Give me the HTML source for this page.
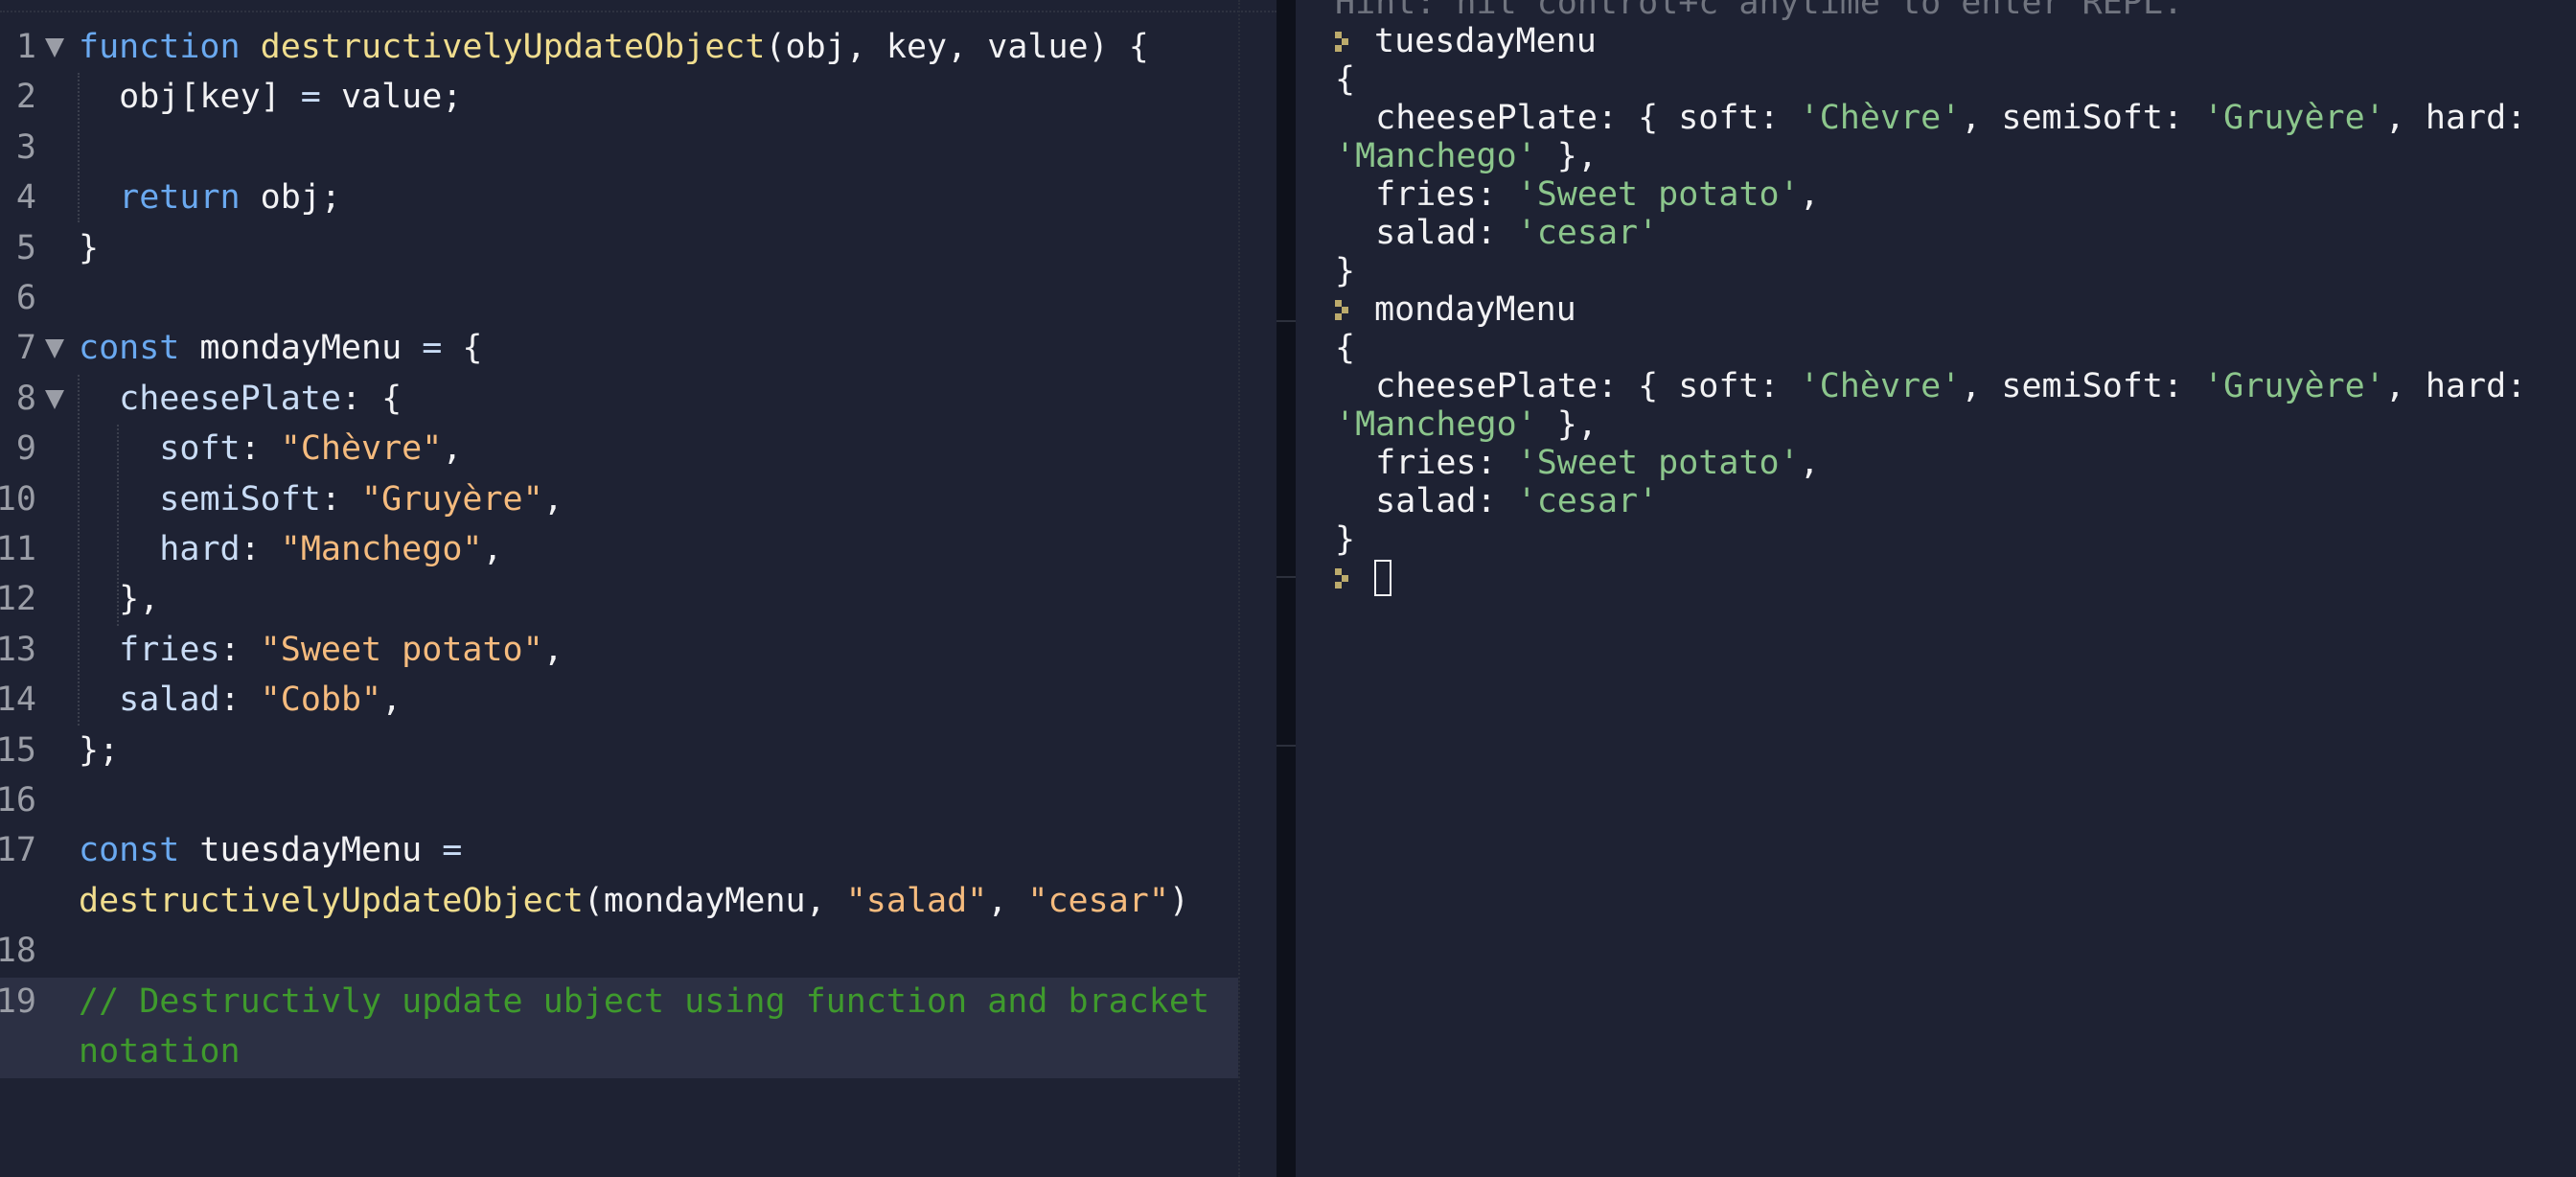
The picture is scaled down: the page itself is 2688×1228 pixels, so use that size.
<!DOCTYPE html>
<html><head><meta charset="utf-8"><style>
html,body{margin:0;padding:0;width:2688px;height:1228px;overflow:hidden;background:#1e2233;}
body{position:relative;font-family:"DejaVu Sans Mono","Liberation Mono",monospace;font-size:35px;color:#f2f2f4;}
.l{position:absolute;left:0;width:1332px;height:52.4px;line-height:52.4px;white-space:pre;}
.n{position:absolute;right:1294px;color:#9a9da6;text-align:right;}
.c{position:absolute;left:82px;}
.tri{position:absolute;left:47px;top:17px;width:0;height:0;border-left:10px solid transparent;border-right:10px solid transparent;border-top:20px solid #9a9da6;}
.k{color:#6aa9f0}.f{color:#f0dd8e}.s{color:#f5bb7e}.p{color:#c9dcf5}.cm{color:#3f9a2d}
.r{position:absolute;left:1393px;height:40px;line-height:40px;white-space:pre;}
.g{color:#8cc68c}
.pr{display:inline-block;width:41px;height:40px;position:relative;vertical-align:top}
.pr i{position:absolute;width:7px;height:7px;background:#bcab6c}
.guide{position:absolute;width:0;border-left:2px dotted #3b3f4d;}
</style></head><body>
<div style="position:absolute;left:0;top:11px;width:1332px;border-top:2px dotted #2e3240"></div>
<div style="position:absolute;left:1292px;top:0;height:1228px;border-left:2px dotted #2a2e3b"></div>
<div style="position:absolute;left:0;top:1020px;width:1292px;height:105px;background:#2c3044"></div>
<div class="guide" style="left:81px;top:76px;height:156px"></div>
<div class="guide" style="left:81px;top:391px;height:366px"></div>
<div class="guide" style="left:122px;top:443px;height:210px"></div>

<div class="l" style="top:23px"><span class="n">1</span><span class="tri"></span><span class="c"><span class="k">function</span> <span class="f">destructivelyUpdateObject</span>(obj, key, value) {</span></div>
<div class="l" style="top:75.4px"><span class="n">2</span><span class="c">  obj[key] <span class="p">=</span> value;</span></div>
<div class="l" style="top:127.8px"><span class="n">3</span></div>
<div class="l" style="top:180.2px"><span class="n">4</span><span class="c">  <span class="k">return</span> obj;</span></div>
<div class="l" style="top:232.6px"><span class="n">5</span><span class="c">}</span></div>
<div class="l" style="top:285px"><span class="n">6</span></div>
<div class="l" style="top:337.4px"><span class="n">7</span><span class="tri"></span><span class="c"><span class="k">const</span> mondayMenu <span class="p">=</span> {</span></div>
<div class="l" style="top:389.8px"><span class="n">8</span><span class="tri"></span><span class="c">  <span class="p">cheesePlate</span>: {</span></div>
<div class="l" style="top:442.2px"><span class="n">9</span><span class="c">    <span class="p">soft</span>: <span class="s">"Chèvre"</span>,</span></div>
<div class="l" style="top:494.6px"><span class="n">10</span><span class="c">    <span class="p">semiSoft</span>: <span class="s">"Gruyère"</span>,</span></div>
<div class="l" style="top:547px"><span class="n">11</span><span class="c">    <span class="p">hard</span>: <span class="s">"Manchego"</span>,</span></div>
<div class="l" style="top:599.4px"><span class="n">12</span><span class="c">  },</span></div>
<div class="l" style="top:651.8px"><span class="n">13</span><span class="c">  <span class="p">fries</span>: <span class="s">"Sweet potato"</span>,</span></div>
<div class="l" style="top:704.2px"><span class="n">14</span><span class="c">  <span class="p">salad</span>: <span class="s">"Cobb"</span>,</span></div>
<div class="l" style="top:756.6px"><span class="n">15</span><span class="c">};</span></div>
<div class="l" style="top:809px"><span class="n">16</span></div>
<div class="l" style="top:861.4px"><span class="n">17</span><span class="c"><span class="k">const</span> tuesdayMenu <span class="p">=</span></span></div>
<div class="l" style="top:913.8px"><span class="c"><span class="f">destructivelyUpdateObject</span>(mondayMenu, <span class="s">"salad"</span>, <span class="s">"cesar"</span>)</span></div>
<div class="l" style="top:966.2px"><span class="n">18</span></div>
<div class="l" style="top:1018.6px"><span class="n">19</span><span class="c cm">// Destructivly update ubject using function and bracket</span></div>
<div class="l" style="top:1071px"><span class="c cm">notation</span></div>

<div style="position:absolute;left:1332px;top:0;width:20px;height:1228px;background:#0e111b"></div>
<div style="position:absolute;left:1332px;top:334px;width:20px;height:2px;background:#2c303c"></div>
<div style="position:absolute;left:1332px;top:601px;width:20px;height:2px;background:#2c303c"></div>
<div style="position:absolute;left:1332px;top:777px;width:20px;height:2px;background:#2c303c"></div>

<div class="r" style="top:-17px;color:#70747f">Hint: hit control+c anytime to enter REPL.</div>
<div class="r" style="top:23px"><span class="pr"><i style="left:0;top:10px"></i><i style="left:7px;top:17px"></i><i style="left:0;top:24px"></i></span>tuesdayMenu</div>
<div class="r" style="top:63px">{</div>
<div class="r" style="top:103px">  cheesePlate: { soft: <span class="g">'Chèvre'</span>, semiSoft: <span class="g">'Gruyère'</span>, hard:</div>
<div class="r" style="top:143px"><span class="g">'Manchego'</span> },</div>
<div class="r" style="top:183px">  fries: <span class="g">'Sweet potato'</span>,</div>
<div class="r" style="top:223px">  salad: <span class="g">'cesar'</span></div>
<div class="r" style="top:263px">}</div>
<div class="r" style="top:303px"><span class="pr"><i style="left:0;top:10px"></i><i style="left:7px;top:17px"></i><i style="left:0;top:24px"></i></span>mondayMenu</div>
<div class="r" style="top:343px">{</div>
<div class="r" style="top:383px">  cheesePlate: { soft: <span class="g">'Chèvre'</span>, semiSoft: <span class="g">'Gruyère'</span>, hard:</div>
<div class="r" style="top:423px"><span class="g">'Manchego'</span> },</div>
<div class="r" style="top:463px">  fries: <span class="g">'Sweet potato'</span>,</div>
<div class="r" style="top:503px">  salad: <span class="g">'cesar'</span></div>
<div class="r" style="top:543px">}</div>
<div class="r" style="top:583px"><span class="pr"><i style="left:0;top:10px"></i><i style="left:7px;top:17px"></i><i style="left:0;top:24px"></i></span><span style="display:inline-block;width:18px;height:38px;border:2px solid #f2f2f4;box-sizing:border-box;vertical-align:top;margin-top:1px"></span></div>
</body></html>
